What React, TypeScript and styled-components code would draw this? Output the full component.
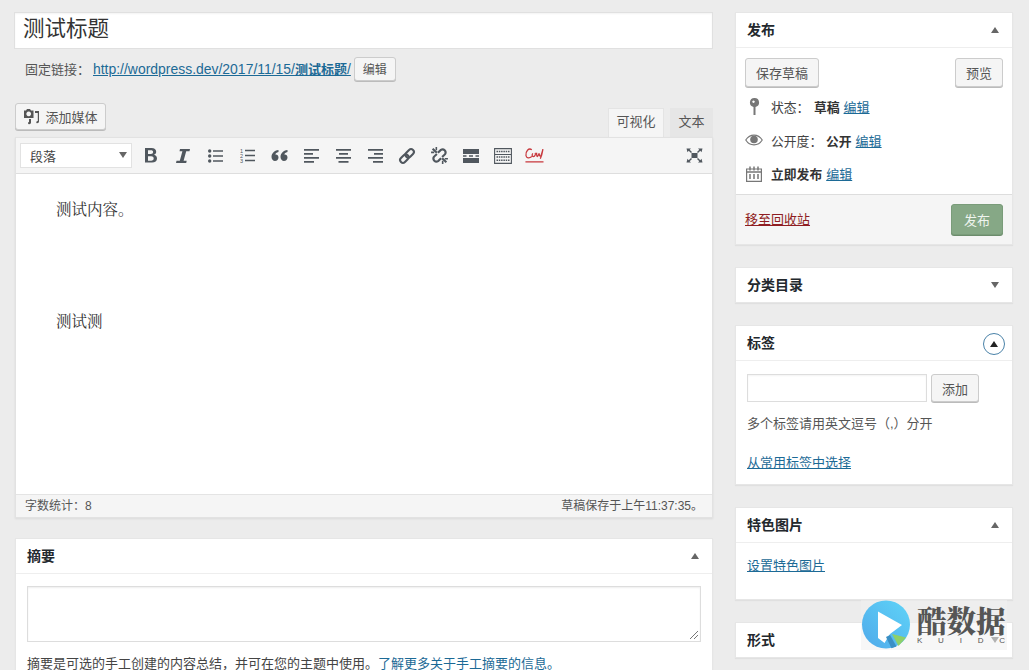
import React from "react";
import styled, { createGlobalStyle } from "styled-components";

const Global = createGlobalStyle`
  html, body { margin: 0; padding: 0; height: 670px; overflow: hidden; background: #ececec; }
  body { font-family: "Liberation Sans", "Noto Sans CJK SC", sans-serif; font-size: 13px; color: #444; }
  * { box-sizing: border-box; }
`;

const Page = styled.div`
  position: relative;
  display: grid;
  grid-template-columns: 699px 278px;
  column-gap: 22px;
  padding: 12px 0 0 14px;
  width: 1029px;
  height: 670px;
  overflow: hidden;
`;
const Main = styled.div`display: flex; flex-direction: column;`;
const Side = styled.div`display: flex; flex-direction: column; gap: 22px;`;

const TitleBox = styled.div`
  height: 37px;
  background: #fff;
  border: 1px solid #e0e0e0;
  box-shadow: inset 0 1px 2px rgba(0,0,0,.05);
  padding: 0 8px;
  font-size: 21.5px;
  line-height: 33px;
  color: #333;
`;
const PermaRow = styled.div`
  display: flex; align-items: center;
  height: 27px;
  margin-top: 6px;
  padding-left: 11px;
  font-size: 13px;
  color: #555;
`;
const PermaLabel = styled.span`width: 68px;`;
const Link = styled.a<{ $danger?: boolean }>`
  color: ${p => (p.$danger ? "#8f1d22" : "#1c6a96")};
  text-decoration: underline;
  font-size: 13px;
`;
const UrlLink = styled(Link)`
  font-size: 13.95px;
  b { font-size: 13px; font-weight: 600; }
`;
const Button = styled.button<{ $w: number; $h: number }>`
  width: ${p => p.$w}px;
  height: ${p => p.$h}px;
  padding: 0;
  font: inherit;
  font-size: 13px;
  color: #555;
  background: #f5f5f5;
  border: 1px solid #ccc;
  border-radius: 3px;
  box-shadow: 0 1px 0 #bbb;
  display: inline-flex; align-items: center; justify-content: center; gap: 5px;
  flex: none;
`;
const EditButton = styled(Button)`margin-left: 3px; font-size: 12px;`;
const MediaButton = styled(Button)`align-self: flex-start; margin-left: 1px;`;
const TabBar = styled.div`
  display: flex; align-items: flex-end; justify-content: space-between;
  margin-top: 21px;
  height: 34px;
`;
const Tabs = styled.div`display: flex; gap: 6px; align-self: flex-end;`;
const Tab = styled.div<{ $on?: boolean }>`
  height: 29px;
  width: ${p => (p.$on ? 56 : 43)}px;
  font-size: 13px;
  line-height: 26px;
  color: #555;
  text-align: center;
  background: ${p => (p.$on ? "#f5f5f5" : "#e6e6e6")};
  border: 1px solid ${p => (p.$on ? "#e4e4e4" : "#e6e6e6")};
  border-bottom: none;
`;
const Editor = styled.div`
  margin-left: 1px;
  border: 1px solid #e2e2e2;
  box-shadow: 0 1px 2px rgba(0,0,0,.08);
  background: #fff;
  display: flex; flex-direction: column;
`;
const Toolbar = styled.div`
  height: 36px;
  background: #f5f5f5;
  border-bottom: 1px solid #dedede;
  display: flex; align-items: center;
  padding-left: 4px;
`;
const FormatSelect = styled.div`
  width: 112px; height: 25px;
  background: #fff;
  border: 1px solid #e2e2e2;
  display: flex; align-items: center; justify-content: space-between;
  padding: 0 4px 1px 9px;
  font-size: 13px;
  color: #444;
  margin-right: 3px;
`;
const Caret = styled.span<{ $down?: boolean; $dark?: boolean }>`
  width: 0; height: 0;
  border-left: 4.5px solid transparent;
  border-right: 4.5px solid transparent;
  ${p => (p.$down ? "border-top" : "border-bottom")}: 6px solid ${p => (p.$dark ? "#222" : "#666")};
`;
const ToolIcon = styled.span`
  width: 32px; height: 24px;
  display: flex; align-items: center; justify-content: center;
  flex: none;
  color: #50575e;
`;
const FullToggle = styled(ToolIcon)`margin-right: 2px;`;
const ToolSpacer = styled.span`flex: 1;`;
const Content = styled.div`
  height: 320px;
  padding: 23px 40px;
  font-family: "Noto Serif CJK SC", "Liberation Serif", "Noto Sans CJK SC", serif;
  font-size: 15.5px;
  color: #333;
  line-height: 22px;
  display: flex; flex-direction: column; gap: 90px;
`;
const StatusBar = styled.div`
  height: 23px;
  background: #f5f5f5;
  border-top: 1px solid #e4e4e4;
  display: flex; justify-content: space-between; align-items: center;
  padding: 0 9px 3px 9px;
  font-size: 12px;
  color: #555;
`;
const Panel = styled.section<{ $h: number }>`
  background: #fff;
  border: 1px solid #e6e6e6;
  box-shadow: 0 1px 1px rgba(0,0,0,.05);
  height: ${p => p.$h}px;
  flex: none;
`;
const ExcerptPanel = styled(Panel)`margin: 20px 0 0 1px;`;
const PanelHead = styled.header<{ $open?: boolean }>`
  height: ${p => (p.$open ? 35 : 34)}px;
  ${p => (p.$open ? "border-bottom: 1px solid #eee;" : "")}
  display: flex; align-items: center; justify-content: space-between;
  padding: 0 13px 0 11px;
  font-size: 14px;
  font-weight: 700;
  color: #23282d;
`;
const HeadTitle = styled.h2`
  margin: 0 0 2px;
  font: inherit;
`;
const Toggle = styled.span`
  width: 22px; height: 22px; margin-right: -6px; margin-top: 1px;
  border-radius: 50%;
  border: 1.5px solid #4a82a8;
  display: flex; align-items: center; justify-content: center;
`;
const PublishBody = styled.div`padding: 10px 9px 0 9px;`;
const Row = styled.div`display: flex; justify-content: space-between;`;
const MetaRows = styled.div`margin-top: 3px;`;
const MetaRow = styled.div`
  height: 33.5px;
  display: flex; align-items: center;
  font-size: 12.8px;
  color: #444;
`;
const MetaIcon = styled.span`
  width: 18px; display: flex; justify-content: center; margin-right: 8px; color: #777;
`;
const MetaLabel = styled.span<{ $w: number }>`width: ${p => p.$w}px;`;
const Strong = styled.b`font-weight: 600; color: #333; margin-right: 4px;`;
const PublishFoot = styled.div`
  height: 50px;
  margin-top: 3.5px;
  background: #f5f5f5;
  border-top: 1px solid #ddd;
  display: flex; align-items: center; justify-content: space-between;
  padding: 0 9px 0 9px;
`;
const TrashLink = styled(Link)`margin-bottom: 2px;`;
const PrimaryButton = styled(Button)`
  background: #86a886;
  border-color: #7a9c7a;
  box-shadow: 0 1px 0 #6c8c6c;
  color: #eef4ee;
`;
const TagBody = styled.div`padding: 13px 11px 0;`;
const TagInputRow = styled.div`display: flex; gap: 4px; height: 28px;`;
const TagInput = styled.div`
  width: 180px; height: 28px;
  background: #fff;
  border: 1px solid #ddd;
  box-shadow: inset 0 1px 2px rgba(0,0,0,.05);
`;
const Hint = styled.p`margin: 12px 0 18px; font-size: 13px; color: #555; line-height: 20px;`;
const FeatBody = styled.div`padding: 12px 11px 0;`;
const ExcerptBody = styled.div`padding: 12px 11px 0 11px;`;
const TextArea = styled.div`
  position: relative;
  height: 56px;
  border: 1px solid #ddd;
  box-shadow: inset 0 1px 2px rgba(0,0,0,.07);
`;
const Grip = styled.svg`position: absolute; right: 1px; bottom: 1px;`;
const ExcerptText = styled.p`margin: 14px 0 0 0; font-size: 13px; line-height: 16px; color: #444; white-space: nowrap;`;
const ExcerptLink = styled(Link)`text-decoration: none;`;
const Mark = styled.div`
  position: absolute;
  left: 861px; top: 600px;
  width: 146px; height: 50px;
  display: flex; gap: 6px;
  background: rgba(240,240,240,.55);
`;
const MarkText = styled.div`display: flex; flex-direction: column; padding-top: 3px;`;
const MarkTitle = styled.div`
  font-family: "Noto Serif CJK SC", "Noto Sans CJK SC", serif;
  font-weight: 900;
  font-size: 29.5px;
  line-height: 33px;
  color: #555;
  white-space: nowrap;
`;
const MarkSub = styled.div`
  display: flex; justify-content: space-between;
  width: 88px;
  font-size: 8px;
  line-height: 10px;
  color: #555;
`;

const S = { fill: "none", stroke: "currentColor" } as const;
const NUM = { fontSize: 5.5, fill: "currentColor", fontFamily: "Liberation Sans" };

const tools: React.ReactNode[] = [
  <svg key="b" width="14" height="17" viewBox="0 0 14 17"><path fill="currentColor" fillRule="evenodd" d="M1 1h6.500c3 0 4.700 1.400 4.700 3.700 0 1.500-.9 2.600-2.200 3.100 1.700.4 3 1.700 3 3.600 0 2.500-1.900 4.100-5 4.100H1zM4 3.300v3.700h2.900c1.400 0 2.200-.7 2.200-1.900S8.300 3.300 6.900 3.300zM4 9.300v4.400h3.200c1.500 0 2.500-.8 2.500-2.200S8.700 9.300 7.200 9.300z" /></svg>,
  <svg key="i" width="14" height="16" viewBox="0 0 14 16"><path fill="currentColor" d="M4 1h10l-.5 2.200h-3.300L7.600 12.800h3.100L10.200 15H0l.5-2.200h3.300l2.600-9.600H3.500z" /></svg>,
  <svg key="ul" width="15" height="14" viewBox="0 0 15 14"><g fill="currentColor"><circle cx="1.700" cy="2" r="1.700" /><circle cx="1.700" cy="7" r="1.700" /><circle cx="1.700" cy="12" r="1.700" /></g><path {...S} strokeWidth="1.300" d="M5 2h10M5 7h10M5 12h10" /></svg>,
  <svg key="ol" width="15" height="15" viewBox="0 0 15 15"><text x="0" y="4.800" {...NUM}>1</text><text x="0" y="9.800" {...NUM}>2</text><text x="0" y="14.800" {...NUM}>3</text><path {...S} strokeWidth="1.300" d="M5 2.500h10M5 7.500h10M5 12.500h10" /></svg>,
  <svg key="q" width="17" height="13" viewBox="0 0 17 13"><path fill="currentColor" d="M7.500 1v2C5.500 3.500 4.500 4.500 4.300 5.500 6.200 5.300 7.500 6.600 7.500 8.500S6 12 4 12 .5 10.300.5 8C.5 4.500 3 1.500 7.500 1zM16.500 1v2c-2 .5-3 1.500-3.200 2.500 1.900-.2 3.200 1.100 3.200 3S15 12 13 12s-3.500-1.700-3.500-4c0-3.500 2.500-6.500 7-7z" /></svg>,
  <svg key="al" width="15" height="14" viewBox="0 0 15 14"><path fill="currentColor" d="M0 0h15v1.800H0zM0 4h9v1.800H0zM0 8h15v1.800H0zM0 12h10v1.800H0z" /></svg>,
  <svg key="ac" width="15" height="14" viewBox="0 0 15 14"><path fill="currentColor" d="M0 0h15v1.800H0zM3 4h9v1.800H3zM0 8h15v1.800H0zM2.500 12h10v1.800h-10z" /></svg>,
  <svg key="ar" width="15" height="14" viewBox="0 0 15 14"><path fill="currentColor" d="M0 0h15v1.800H0zM6 4h9v1.800H6zM0 8h15v1.800H0zM5 12h10v1.800H5z" /></svg>,
  <svg key="link" width="18" height="18" viewBox="0 0 18 18"><g {...S} strokeWidth="2.100" transform="rotate(-45 9 9)"><rect x="0.500" y="6.200" width="9.500" height="5.600" rx="2.800" /><rect x="8" y="6.200" width="9.500" height="5.600" rx="2.800" /></g></svg>,
  <svg key="unlink" width="19" height="19" viewBox="0 0 18 18"><path {...S} strokeWidth="2" d="M6.500 7.500L3.700 10.300a2.900 2.900 0 0 0 4 4l2.800-2.800M11.500 10.500l2.800-2.800a2.900 2.900 0 0 0-4-4L7.500 6.500M2.500 2.500l4 4M11.500 11.500l4 4" /><path {...S} strokeWidth="1.500" d="M6 1v3M1 6h3M12 17v-3M17 12h-3" /></svg>,
  <svg key="more" width="16" height="14" viewBox="0 0 16 14"><path fill="currentColor" d="M0 0h16v5H0zM0 9h16v5H0zM0 6.300h3.500v1.400H0zM6 6.300h4v1.400H6zM12.500 6.300H16v1.400h-3.500z" /></svg>,
  <svg key="kbd" width="18" height="16" viewBox="0 0 18 16"><path {...S} strokeWidth="1.100" d="M.6.600h16.800v14.800H.6zM.6 6.500h16.800" /><path stroke="currentColor" strokeWidth="1.600" strokeDasharray="1.500 .8" d="M2.500 3.500h13M2.500 9h13M2.500 12.200h13" /></svg>,
  <svg key="spell" width="22" height="17" viewBox="0 0 20 16"><path fill="none" stroke="#c8393e" strokeWidth="1.200" d="M7 2.500C4 .5 1 4 1.500 8c.3 2.500 3 3 5.500 1M8 6c-1 1-1 3 .5 3S11 6.500 10 5.500M11.500 5.500c0 1 0 3.500.5 3.500s1.500-2 2-3c0 1 .3 2.500 1 2.500s1.500-3 2.500-6.500c-.5 3-1.500 7-2.500 9" /><path stroke="#c8393e" strokeWidth="1.200" d="M1 14h17" /></svg>,
];

const PinIcon = () => (
  <svg width="11" height="17" viewBox="0 0 11 17"><path fill="currentColor" fillRule="evenodd" d="M5.500 0a4.500 4.500 0 0 1 1 8.900V17h-2V8.900A4.500 4.500 0 0 1 5.500 0zM4.500 2.500a1.200 1.200 0 1 0 .01 0z" /></svg>
);
const EyeIcon = () => (
  <svg width="18" height="12" viewBox="0 0 19 12"><path fill="none" stroke="currentColor" strokeWidth="1.200" d="M.8 6C3 2.500 6 .8 9.500.8s6.500 1.700 8.700 5.200c-2.200 3.500-5.200 5.200-8.700 5.200S3 9.500.8 6z" /><circle cx="9.500" cy="5.500" r="4" fill="currentColor" /></svg>
);
const CalIcon = () => (
  <svg width="16" height="16" viewBox="0 0 16 16"><path fill="none" stroke="currentColor" strokeWidth="1.200" d="M.6 3h14.800v12.400H.6z" /><path stroke="currentColor" strokeWidth="1.500" d="M4 .5v4M8 .5v4M12 .5v4M4 8v5M8 8v5M12 8v5M.6 6h14.800" /></svg>
);
const MediaIcon = () => (
  <svg width="17" height="17" viewBox="0 0 17 17"><path fill="#555" fillRule="evenodd" d="M1 2.500h2L4 1h3l1 1.500h2.500V10H1zM5.700 3.500a2.400 2.400 0 1 0 .01 0zM12 3h4v10.500c0 1.500-1.700 2-2.500 1.500-.6-.5 0-2 1.300-1.900V5H12zM6 11h2v3.500C8 16 6.500 16.500 5.500 16s-.5-2 .5-2z" /></svg>
);
const FullIcon = () => (
  <svg width="17" height="15" viewBox="0 0 17 15"><path fill="#50575e" d="M5.500 5h6v5h-6zM.5.500H5L3.700 1.800 6 4 5 5 2.700 2.800 1.500 4.200zM16.500.500H12l1.300 1.300L11 4l1 1 2.300-2.200 1.200 1.400zM.5 14.500H5l-1.300-1.300L6 11l-1-1-2.300 2.200L1.500 10.800zM16.500 14.500H12l1.300-1.300L11 11l1-1 2.300 2.200 1.200-1.400z" /></svg>
);
const Logo = () => (
  <svg width="50" height="50" viewBox="0 0 50 50">
    <defs>
      <linearGradient id="logoFill" x1="0" y1="1" x2="1" y2="0">
        <stop offset="0" stopColor="#4fa9ea" />
        <stop offset="1" stopColor="#5fd4f8" />
      </linearGradient>
    </defs>
    <circle cx="25" cy="24.500" r="24" fill="url(#logoFill)" />
    <path fill="#fff" d="M17 11.500l24 13.500-12 9-5.500 9L17 38z" />
    <path fill="#3a8fc4" d="M29 35l6.500 11.500-5 1.800L25 37z" />
    <path fill="#8ed069" d="M31 34l14 3.500-7.500 8.500z" />
  </svg>
);

export default function App() {
  return (
    <>
      <Global />
      <Page>
        <Main>
          <TitleBox>测试标题</TitleBox>
          <PermaRow>
            <PermaLabel>固定链接：</PermaLabel>
            <UrlLink>http://wordpress.dev/2017/11/15/<b>测试标题</b>/</UrlLink>
            <EditButton $w={42} $h={24}>编辑</EditButton>
          </PermaRow>
          <TabBar>
            <MediaButton $w={91} $h={27}>
              <MediaIcon />添加媒体
            </MediaButton>
            <Tabs>
              <Tab $on>可视化</Tab>
              <Tab>文本</Tab>
            </Tabs>
          </TabBar>
          <Editor>
            <Toolbar>
              <FormatSelect>段落<Caret $down /></FormatSelect>
              {tools.map((t, i) => <ToolIcon key={i}>{t}</ToolIcon>)}
              <ToolSpacer />
              <FullToggle><FullIcon /></FullToggle>
            </Toolbar>
            <Content>
              <div>测试内容。</div>
              <div>测试测</div>
            </Content>
            <StatusBar>
              <span>字数统计：8</span>
              <span>草稿保存于上午11:37:35。</span>
            </StatusBar>
          </Editor>
          <ExcerptPanel $h={200}>
            <PanelHead $open><HeadTitle>摘要</HeadTitle><Caret /></PanelHead>
            <ExcerptBody>
              <TextArea>
                <Grip width="10" height="10" viewBox="0 0 10 10"><path stroke="#777" d="M1 9l8-8M5 9l4-4" /></Grip>
              </TextArea>
              <ExcerptText>摘要是可选的手工创建的内容总结，并可在您的主题中使用。<ExcerptLink>了解更多关于手工摘要的信息。</ExcerptLink></ExcerptText>
            </ExcerptBody>
          </ExcerptPanel>
        </Main>
        <Side>
          <Panel $h={233}>
            <PanelHead $open><HeadTitle>发布</HeadTitle><Caret /></PanelHead>
            <PublishBody>
              <Row>
                <Button $w={74} $h={29}>保存草稿</Button>
                <Button $w={48} $h={29}>预览</Button>
              </Row>
              <MetaRows>
                <MetaRow>
                  <MetaIcon><PinIcon /></MetaIcon><MetaLabel $w={43}>状态：</MetaLabel><Strong>草稿</Strong><Link>编辑</Link>
                </MetaRow>
                <MetaRow>
                  <MetaIcon><EyeIcon /></MetaIcon><MetaLabel $w={55}>公开度：</MetaLabel><Strong>公开</Strong><Link>编辑</Link>
                </MetaRow>
                <MetaRow>
                  <MetaIcon><CalIcon /></MetaIcon><Strong>立即发布</Strong><Link>编辑</Link>
                </MetaRow>
              </MetaRows>
            </PublishBody>
            <PublishFoot>
              <TrashLink $danger>移至回收站</TrashLink>
              <PrimaryButton $w={52} $h={31}>发布</PrimaryButton>
            </PublishFoot>
          </Panel>
          <Panel $h={36}>
            <PanelHead><HeadTitle>分类目录</HeadTitle><Caret $down /></PanelHead>
          </Panel>
          <Panel $h={160}>
            <PanelHead $open><HeadTitle>标签</HeadTitle><Toggle><Caret $dark /></Toggle></PanelHead>
            <TagBody>
              <TagInputRow>
                <TagInput />
                <Button $w={48} $h={28}>添加</Button>
              </TagInputRow>
              <Hint>多个标签请用英文逗号（,）分开</Hint>
              <Link>从常用标签中选择</Link>
            </TagBody>
          </Panel>
          <Panel $h={93}>
            <PanelHead $open><HeadTitle>特色图片</HeadTitle><Caret /></PanelHead>
            <FeatBody><Link>设置特色图片</Link></FeatBody>
          </Panel>
          <Panel $h={36}>
            <PanelHead><HeadTitle>形式</HeadTitle><Caret $down /></PanelHead>
          </Panel>
        </Side>
        <Mark>
          <Logo />
          <MarkText>
            <MarkTitle>酷数据</MarkTitle>
            <MarkSub><span>K</span><span>U</span><span>I</span><span>D</span><span>C</span></MarkSub>
          </MarkText>
        </Mark>
      </Page>
    </>
  );
}
